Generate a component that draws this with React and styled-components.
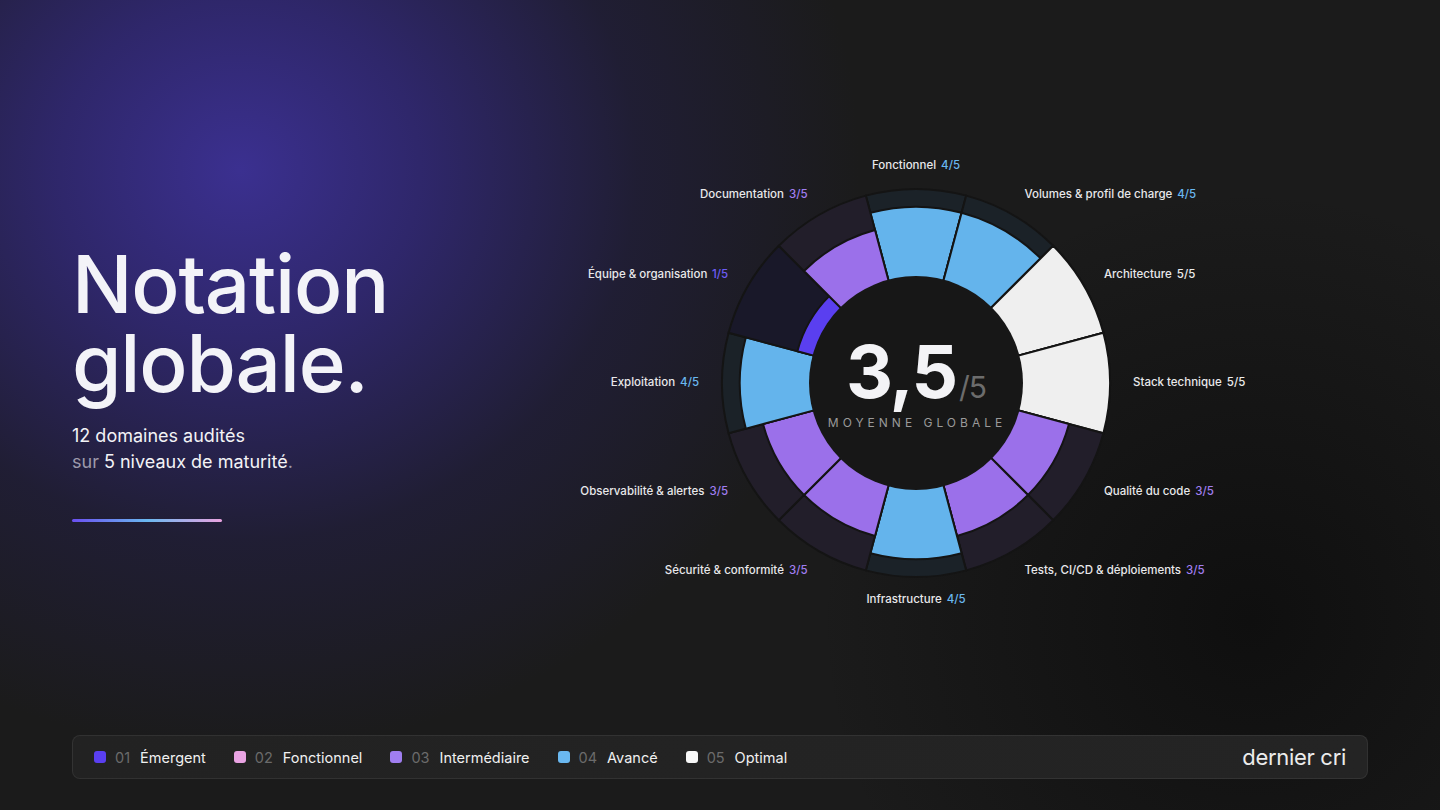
import React from "react";
import styled, { createGlobalStyle } from "styled-components";

const GlobalStyle = createGlobalStyle`
  html, body {
    margin: 0;
    padding: 0;
    background: #1a1a1a;
  }
  * {
    box-sizing: border-box;
  }
`;

const COLORS = {
  1: { bar: "#5a3ff0", track: "#191829", text: "#6d5cf5" },
  3: { bar: "#9b70ea", track: "#221e2a", text: "#a07ef0" },
  4: { bar: "#64b4ec", track: "#1b2228", text: "#6ab8f0" },
  5: { bar: "#efefef", track: "#efefef", text: "#ececec" },
};

// ordre horaire, en partant du haut
const domaines = [
  { label: "Fonctionnel", note: 4 },
  { label: "Volumes & profil de charge", note: 4 },
  { label: "Architecture", note: 5 },
  { label: "Stack technique", note: 5 },
  { label: "Qualité du code", note: 3 },
  { label: "Tests, CI/CD & déploiements", note: 3 },
  { label: "Infrastructure", note: 4 },
  { label: "Sécurité & conformité", note: 3 },
  { label: "Observabilité & alertes", note: 3 },
  { label: "Exploitation", note: 4 },
  { label: "Équipe & organisation", note: 1 },
  { label: "Documentation", note: 3 },
];

const niveaux = [
  { num: "01", label: "Émergent", color: "#5a3ff0" },
  { num: "02", label: "Fonctionnel", color: "#e9a3e2" },
  { num: "03", label: "Intermédiaire", color: "#a07ef0" },
  { num: "04", label: "Avancé", color: "#6ab8f0" },
  { num: "05", label: "Optimal", color: "#f7f7f7" },
];

const Page = styled.div`
  width: 1440px;
  height: 810px;
  overflow: hidden;
  display: flex;
  flex-direction: column;
  padding: 30px 72px 31px;
  font-family: Inter, "Liberation Sans", sans-serif;
  color: #f2f2f6;
  background:
    radial-gradient(circle at 1250px 620px, #0f0f0f 0, rgba(15, 15, 15, 0) 430px),
    radial-gradient(ellipse 620px 580px at 240px 170px, #3b3090 0%, rgba(52, 42, 128, 0.78) 30%, rgba(40, 34, 92, 0.38) 64%, rgba(27, 27, 27, 0) 100%),
    #1b1b1b;
`;

const Main = styled.main`
  flex: 1;
  display: flex;
  align-items: center;
`;

const Intro = styled.section`
  width: 504px;
  display: flex;
  flex-direction: column;
`;

const Title = styled.h1`
  margin: 0;
  font-size: 80px;
  line-height: 79px;
  font-weight: 500;
  letter-spacing: -1.2px;
  color: #f3f3f8;

  span {
    display: block;
  }
`;

const Subtitle = styled.p`
  margin: 21px 0 0;
  font-size: 18px;
  line-height: 26px;
  font-weight: 400;
  color: #f3f3f6;

  span {
    color: #9d9aab;
  }
`;

const Rule = styled.div`
  width: 150px;
  height: 3px;
  border-radius: 2px;
  margin-top: 44px;
  background: linear-gradient(90deg, #6a4ff0 0%, #6ab8f0 50%, #eaa3e0 100%);
`;

const Chart = styled.svg`
  display: block;
  overflow: visible;
  font-family: Inter, "Liberation Sans", sans-serif;
`;

const Legend = styled.footer`
  height: 44px;
  display: flex;
  align-items: center;
  justify-content: space-between;
  padding: 0 21px;
  border-radius: 8px;
  border: 1px solid rgba(255, 255, 255, 0.07);
  background: linear-gradient(90deg, #222222, #242424);
`;

const Levels = styled.ul`
  display: flex;
  gap: 28px;
  margin: 0;
  padding: 0;
  list-style: none;
`;

const Level = styled.li`
  display: flex;
  align-items: center;
  font-size: 14.5px;
  color: #f0f0f0;

  &::before {
    content: "";
    width: 12px;
    height: 12px;
    border-radius: 3px;
    margin-right: 9px;
    background: ${(p) => p.$color};
  }

  b {
    font-weight: 400;
    color: #6b6b6b;
    margin-right: 10px;
  }
`;

const Logo = styled.div`
  font-family: Inter, "Liberation Sans", sans-serif;
  font-size: 22px;
  font-weight: 400;
  letter-spacing: -0.3px;
  color: #ececec;
`;

const CX = 340;
const CY = 240;
const R0 = 105;
const R1 = 194;

function polar(r, deg) {
  const a = ((deg - 90) * Math.PI) / 180;
  return [CX + r * Math.cos(a), CY + r * Math.sin(a)];
}

function sector(r0, r1, a0, a1) {
  const [x0, y0] = polar(r1, a0);
  const [x1, y1] = polar(r1, a1);
  const [x2, y2] = polar(r0, a1);
  const [x3, y3] = polar(r0, a0);
  return `M${x0} ${y0} A${r1} ${r1} 0 0 1 ${x1} ${y1} L${x2} ${y2} A${r0} ${r0} 0 0 0 ${x3} ${y3} Z`;
}

function Radial() {
  return (
    <Chart width="680" height="480" viewBox="0 0 680 480">
      {domaines.map((d, i) => {
        const a0 = i * 30 - 15;
        const a1 = a0 + 30;
        const c = COLORS[d.note];
        const r = R0 + ((R1 - R0) * d.note) / 5;
        return (
          <g key={d.label}>
            <path d={sector(R0 - 4, R1, a0, a1)} fill={c.track} stroke="#141414" strokeWidth="2" />
            <path d={sector(R0 - 4, r, a0, a1)} fill={c.bar} stroke="#141414" strokeWidth="2" />
          </g>
        );
      })}
      <circle cx={CX} cy={CY} r={107} fill="#171717" />

      {domaines.map((d, i) => {
        const deg = i * 30;
        const [x, y] = polar(217, deg);
        const anchor = deg === 0 || deg === 180 ? "middle" : deg < 180 ? "start" : "end";
        return (
          <text
            key={d.label}
            x={x}
            y={y}
            textAnchor={anchor}
            dominantBaseline="middle"
            fontSize="11.5"
            fontWeight="500"
            fill="#e8e8ea"
          >
            {d.label}
            <tspan dx="5" fill={COLORS[d.note].text}>
              {d.note}/5
            </tspan>
          </text>
        );
      })}

      <text x={CX} y={CY + 15} textAnchor="middle" fontSize="73" fontWeight="700" letterSpacing="-2" fill="#f3f3f6">
        3,5
        <tspan fontSize="30" fontWeight="400" letterSpacing="-1" fill="#6c6c6c" dx="3">
          /5
        </tspan>
      </text>
      <text x={CX + 1} y={CY + 44} textAnchor="middle" fontSize="12" letterSpacing="4" fill="#9a9a9a">
        MOYENNE GLOBALE
      </text>
    </Chart>
  );
}

export default function App() {
  return (
    <>
      <GlobalStyle />
      <Page>
        <Main>
          <Intro>
            <Title>
              <span>Notation</span>
              <span>globale.</span>
            </Title>
            <Subtitle>
              12 domaines audités
              <br />
              <span>sur</span> 5 niveaux de maturité<span>.</span>
            </Subtitle>
            <Rule />
          </Intro>
          <Radial />
        </Main>
        <Legend>
          <Levels>
            {niveaux.map((n) => (
              <Level key={n.num} $color={n.color}>
                <b>{n.num}</b>
                {n.label}
              </Level>
            ))}
          </Levels>
          <Logo>dernier cri</Logo>
        </Legend>
      </Page>
    </>
  );
}
